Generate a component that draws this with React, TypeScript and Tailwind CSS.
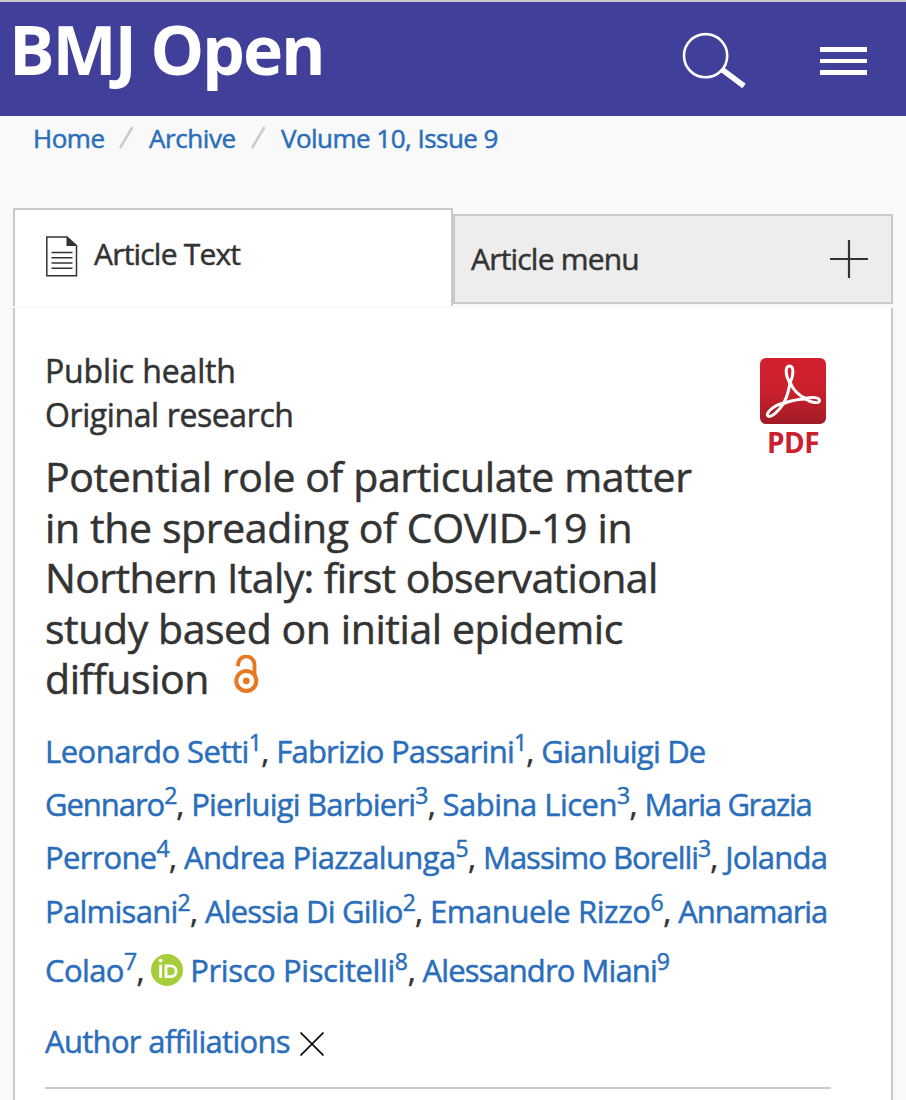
import React from "react";

interface Author {
  name: string;
  className: string;
  sup?: string;
  orcid?: boolean;
}

interface AuthorRow {
  className: string;
  authors: Author[];
}

const titleLines = [
  { text: "Potential role of particulate matter", className: "tracking-[-0.4px]" },
  { text: "in the spreading of COVID-19 in", className: "tracking-[-0.38px]" },
  { text: "Northern Italy: first observational", className: "tracking-[-0.63px]" },
  { text: "study based on initial epidemic", className: "tracking-[-0.43px]" },
];

// A name without a superscript carries on in the next row
const authorRows: AuthorRow[] = [
  {
    className: "h-[53px]",
    authors: [
      { name: "Leonardo Setti", sup: "1", className: "tracking-[-0.53px]" },
      { name: "Fabrizio Passarini", sup: "1", className: "tracking-[-0.78px]" },
      { name: "Gianluigi De", className: "tracking-[-0.8px]" },
    ],
  },
  {
    className: "h-[53px]",
    authors: [
      { name: "Gennaro", sup: "2", className: "tracking-[-1.05px]" },
      { name: "Pierluigi Barbieri", sup: "3", className: "tracking-[-0.8px]" },
      { name: "Sabina Licen", sup: "3", className: "tracking-[-0.52px]" },
      { name: "Maria Grazia", className: "tracking-[-1.32px]" },
    ],
  },
  {
    className: "h-[54px]",
    authors: [
      { name: "Perrone", sup: "4", className: "tracking-[-0.7px]" },
      { name: "Andrea Piazzalunga", sup: "5", className: "tracking-[-0.62px]" },
      { name: "Massimo Borelli", sup: "3", className: "tracking-[-1px]" },
      { name: "Jolanda", className: "tracking-[-0.75px]" },
    ],
  },
  {
    className: "h-[59px]",
    authors: [
      { name: "Palmisani", sup: "2", className: "tracking-[-0.72px]" },
      { name: "Alessia Di Gilio", sup: "2", className: "tracking-[-0.8px]" },
      { name: "Emanuele Rizzo", sup: "6", className: "tracking-[-0.42px]" },
      { name: "Annamaria", className: "tracking-[-1.05px]" },
    ],
  },
  {
    className: "h-[53px]",
    authors: [
      { name: "Colao", sup: "7", className: "tracking-[-0.6px]" },
      { name: "Prisco Piscitelli", sup: "8", orcid: true, className: "tracking-[-0.4px]" },
      { name: "Alessandro Miani", sup: "9", className: "tracking-[-0.9px]" },
    ],
  },
];

const OrcidIcon = () => (
  <svg className="mr-[7px] inline-block h-8 w-8 align-[-4px]" viewBox="0 0 32 32">
    <circle cx="16" cy="16" r="16" fill="#a6ce39" />
    <g fill="none" stroke="#fff" strokeWidth="2.8">
      <path d="M9.6 10.6V24" />
      <path d="M15 11.9h4.2c3.6 0 6 2.2 6 5.4s-2.4 5.4-6 5.4H15z" />
    </g>
    <circle cx="9.6" cy="6.6" r="1.9" fill="#fff" />
  </svg>
);

const OpenAccessIcon = () => (
  <svg className="mt-[2px] h-[38px] w-[25px]" viewBox="0 0 25 38" fill="none" stroke="#e87722">
    <circle cx="12.3" cy="25.9" r="10" strokeWidth="4" />
    <circle cx="12.3" cy="25.9" r="3.3" fill="#e87722" stroke="none" />
    <path d="M4.1 11.3V9.6a8.2 8.2 0 0 1 16.4 0V21" strokeWidth="3.8" />
  </svg>
);

const PdfIcon = () => (
  <svg className="h-[66px] w-[66px] shrink-0" viewBox="0 0 66 66">
    <defs>
      <linearGradient id="pdf-bg" x1="0" y1="0" x2="0" y2="1">
        <stop offset="0" stopColor="#d3202f" />
        <stop offset="0.5" stopColor="#cb202d" />
        <stop offset="1" stopColor="#a01c26" />
      </linearGradient>
    </defs>
    <rect width="66" height="66" rx="6" fill="url(#pdf-bg)" />
    <g fill="none" stroke="#fff" strokeWidth="3" strokeLinejoin="round">
      <path d="M30 25C25 17 25 8 29.500 8S34 17 30 25Z" />
      <path d="M24 45C18 54 11 60 8 58S13 47 24 45Z" />
      <path d="M45 40.500C52 39 59.500 39 59.500 42.500S51 45 45 40.500Z" />
      <path d="M30 24C29 33 27 39 23.500 45.500C31 42.500 39 41 47 41C39 38 33 32 30 24Z" />
    </g>
  </svg>
);

const Header = () => (
  <header className="flex h-[116px] justify-between border-t-2 border-[#c9c9c9] bg-[#403f99] pl-[9px] pr-[39px] text-white">
    <h1 className="text-[68px] font-bold leading-[94px] tracking-[-2.2px] [-webkit-text-stroke:0px]">BMJ Open</h1>
    <div className="flex items-start gap-[74px] pt-[29px]">
      <svg className="h-[60px] w-[66px]" viewBox="0 0 66 60">
        <circle cx="25.600" cy="24.700" r="21.600" fill="none" stroke="#fff" strokeWidth="2.600" />
        <path d="M42 38.500L64 55" stroke="#fff" strokeWidth="5.500" />
      </svg>
      <div className="flex w-[47px] flex-col gap-[7px] pt-4">
        <div className="h-[4.500px] bg-white"></div>
        <div className="h-[4.500px] bg-white"></div>
        <div className="h-[4.500px] bg-white"></div>
      </div>
    </div>
  </header>
);

const Slash = () => (
  <svg className="mt-[6px] h-[23px] w-[15px]" viewBox="0 0 15 23">
    <path d="M1 22L13.500 1" stroke="#ccc" strokeWidth="2.600" />
  </svg>
);

const Breadcrumb = () => (
  <nav className="flex h-[92px] gap-[15px] pl-[33px] pt-[4px] text-[26px] leading-9 text-[#2a6ebb]">
    <a className="w-[71px] tracking-[-0.5px]">Home</a>
    <Slash />
    <a className="w-[87px] tracking-[-0.4px]">Archive</a>
    <Slash />
    <a className="tracking-[-0.53px]">Volume 10, Issue 9</a>
  </nav>
);

const Tabs = () => (
  <div className="flex h-[100px] items-start">
    <div className="flex h-[98px] w-[440px] border-x-2 border-t-2 border-[#c9c9c9] bg-white pl-[31px] pt-[23px]">
      <svg className="mt-[3px] h-[42px] w-8" viewBox="0 0 32 42" fill="none" stroke="#333">
        <path d="M.8 1H21L30.500 9.500V39.700H.8Z" strokeWidth="1.500" />
        <path d="M20.500 1L31 10H20.500Z" fill="#333" stroke="none" />
        <path d="M5.500 16.500h21M5.500 21.700h21M5.500 27h21M5.500 32.300h21" strokeWidth="1.500" />
      </svg>
      <span className="ml-4 text-[30px] leading-[41px] tracking-[-0.8px]">Article Text</span>
    </div>
    <div className="mt-[6px] flex h-[90px] w-[440px] items-center justify-between border-2 border-[#c9c9c9] bg-[#ededed] pl-4 pr-[23px]">
      <span className="text-[30px] leading-[42px] tracking-[-0.8px]">Article menu</span>
      <svg className="h-[38px] w-[38px]" viewBox="0 0 38 38" stroke="#333" strokeWidth="2.200">
        <path d="M0 19h38M19 0v38" />
      </svg>
    </div>
  </div>
);

const AuthorList = () => (
  <div className="text-[31px] leading-[53px] tracking-[-0.6px]">
    {authorRows.map((row) => (
      <div key={row.authors[0].name} className={`whitespace-nowrap ${row.className}`}>
        {row.authors.map((author) => (
          <React.Fragment key={author.name}>
            {author.orcid && <OrcidIcon />}
            <a className={`text-[#2a6ebb] ${author.className}`}>
              {author.name}
              {author.sup && (
                <sup className="relative top-[-12px] align-baseline text-[23px] leading-none">{author.sup}</sup>
              )}
            </a>
            {author.sup && author.sup !== "9" && ", "}
          </React.Fragment>
        ))}
      </div>
    ))}
  </div>
);

const App: React.FC = () => {
  return (
    <div className="h-[1100px] w-[906px] overflow-hidden bg-[#f9f9f9] font-['Open_Sans',sans-serif] text-[#333] [-webkit-text-stroke:0.5px]">
      <Header />
      <Breadcrumb />
      <main className="mx-[13px]">
        <Tabs />
        <article className="h-[792px] border-x-2 border-[#c9c9c9] bg-white pl-[30px] pt-[41px]">
          <div className="flex h-[102px] justify-between pr-[65px]">
            <div className="text-[32px] leading-[44px]">
              <p className="tracking-[-0.15px]">Public health</p>
              <p className="tracking-[-0.4px]">Original research</p>
            </div>
            <a className="flex flex-col items-center pt-[9px] text-[28px] font-bold leading-9 tracking-[-0.5px] text-[#cb202d] [-webkit-text-stroke:0px]">
              <PdfIcon />
              PDF
            </a>
          </div>

          <h2 className="h-[274px] whitespace-nowrap text-[41px] leading-[50.500px]">
            {titleLines.map((line) => (
              <div key={line.text} className={line.className}>
                {line.text}
              </div>
            ))}
            <div className="flex gap-[25px] tracking-[-0.42px]">
              diffusion
              <OpenAccessIcon />
            </div>
          </h2>

          <AuthorList />

          <div className="mt-[22px] flex h-[68px] items-start gap-[10px] text-[31px] leading-[44px] text-[#2a6ebb]">
            <a className="tracking-[-0.7px]">Author affiliations</a>
            <svg className="mt-[13px] h-6 w-6" viewBox="0 0 24 24" stroke="#111" strokeWidth="1.700">
              <path d="M.5.5l23 23M23.500.5l-23 23" />
            </svg>
          </div>
          <hr className="w-[786px] border-t-2 border-[#c9c9c9]" />
        </article>
      </main>
    </div>
  );
};

export default App;
